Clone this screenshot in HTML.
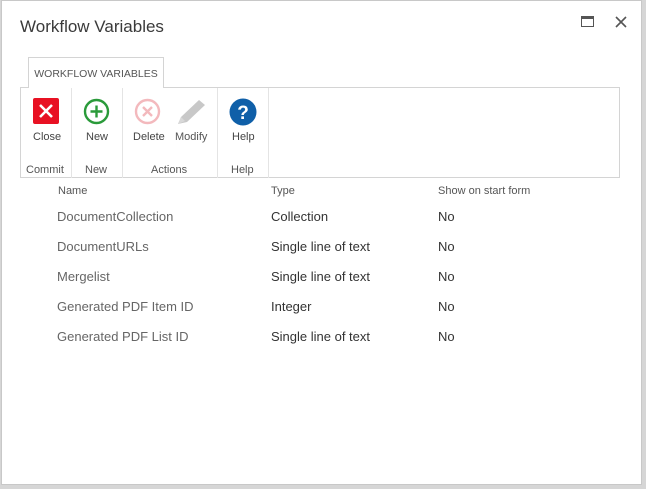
<!DOCTYPE html>
<html><head><meta charset="utf-8"><style>
*{margin:0;padding:0;box-sizing:border-box}
body{width:646px;height:489px;background:#d6d6d6;position:relative;overflow:hidden;font-family:"Segoe UI","Liberation Sans",sans-serif;color:#444}
.dlg{position:absolute;left:1px;top:0;width:641px;height:485px;background:#fff;border:1px solid #c8c8c8}
.a{position:absolute;white-space:nowrap}
.title{left:20px;top:17px;font-size:17px;color:#3a3a3a}
.tab{left:28px;top:57px;width:136px;height:31px;border:1px solid #d4d4d4;border-bottom:none;background:#fff;font-size:10.5px;color:#555;text-align:center;line-height:32px}
.rib{left:20px;top:87px;width:600px;height:91px;border:1px solid #d4d4d4;border-top:1px solid #d4d4d4}
.sep{position:absolute;top:0;width:1px;height:90px;background:#e4e4e4}
.lbl{font-size:11px;color:#444;text-align:center}
.gl{font-size:11px;color:#555;text-align:center;top:164px}
.h{font-size:11px;color:#555;top:185px}
.r{font-size:13px}
.n{color:#666}
.t{color:#333}
</style></head><body>
<div class="dlg"></div>
<div class="a title">Workflow Variables</div>
<svg class="a" style="left:581px;top:16px" width="13" height="12"><rect x="0.5" y="0.5" width="12" height="10" fill="none" stroke="#555"/><rect x="0.5" y="0.5" width="12" height="2.5" fill="#555"/></svg>
<svg class="a" style="left:615px;top:16px" width="12" height="12"><path d="M1 1L11 11M11 1L1 11" stroke="#555" stroke-width="1.6"/></svg>
<div class="a rib"><div class="sep" style="left:50px"></div><div class="sep" style="left:101px"></div><div class="sep" style="left:196px"></div><div class="sep" style="left:247px"></div></div>
<div class="a tab">WORKFLOW VARIABLES</div>
<svg class="a" style="left:33px;top:98px" width="26" height="26"><rect width="26" height="26" rx="2" fill="#e81123"/><path d="M7 7L19 19M19 7L7 19" stroke="#fff" stroke-width="2.6"/></svg>
<svg class="a" style="left:83px;top:98px" width="27" height="27"><circle cx="13.5" cy="13.5" r="11.5" fill="none" stroke="#2a9a3a" stroke-width="2.4"/><path d="M13.5 7.5V19.5M7.5 13.5H19.5" stroke="#2a9a3a" stroke-width="2.4"/></svg>
<svg class="a" style="left:134px;top:98px" width="27" height="27"><circle cx="13.5" cy="13.5" r="11.5" fill="none" stroke="#f3b9bd" stroke-width="2.4"/><path d="M9 9L18 18M18 9L9 18" stroke="#f3b9bd" stroke-width="2.4"/></svg>
<svg class="a" style="left:176px;top:98px" width="32" height="28"><path d="M2 26L5 19L23 2L29 7L11 24Z" fill="#c8c8c8"/><path d="M2 26L5 19L9 23Z" fill="#d8d8d8"/></svg>
<svg class="a" style="left:229px;top:98px" width="28" height="28"><circle cx="14" cy="14" r="13.5" fill="#0f5fa8"/><text x="14" y="21" text-anchor="middle" font-family="Liberation Sans" font-weight="bold" font-size="19" fill="#fff">?</text></svg>
<div class="a lbl" style="left:33px;top:131px">Close</div>
<div class="a lbl" style="left:86px;top:131px">New</div>
<div class="a lbl" style="left:133px;top:131px">Delete</div>
<div class="a lbl" style="left:175px;top:131px;color:#555">Modify</div>
<div class="a lbl" style="left:232px;top:131px">Help</div>
<div class="a gl" style="left:26px">Commit</div>
<div class="a gl" style="left:85px">New</div>
<div class="a gl" style="left:151px">Actions</div>
<div class="a gl" style="left:231px">Help</div>
<div class="a h" style="left:58px">Name</div>
<div class="a h" style="left:271px">Type</div>
<div class="a h" style="left:438px">Show on start form</div>
<div class="a r n" style="left:57px;top:209px">DocumentCollection</div><div class="a r t" style="left:271px;top:209px">Collection</div><div class="a r t" style="left:438px;top:209px">No</div>
<div class="a r n" style="left:57px;top:239px">DocumentURLs</div><div class="a r t" style="left:271px;top:239px">Single line of text</div><div class="a r t" style="left:438px;top:239px">No</div>
<div class="a r n" style="left:57px;top:269px">Mergelist</div><div class="a r t" style="left:271px;top:269px">Single line of text</div><div class="a r t" style="left:438px;top:269px">No</div>
<div class="a r n" style="left:57px;top:299px">Generated PDF Item ID</div><div class="a r t" style="left:271px;top:299px">Integer</div><div class="a r t" style="left:438px;top:299px">No</div>
<div class="a r n" style="left:57px;top:329px">Generated PDF List ID</div><div class="a r t" style="left:271px;top:329px">Single line of text</div><div class="a r t" style="left:438px;top:329px">No</div>
</body></html>
